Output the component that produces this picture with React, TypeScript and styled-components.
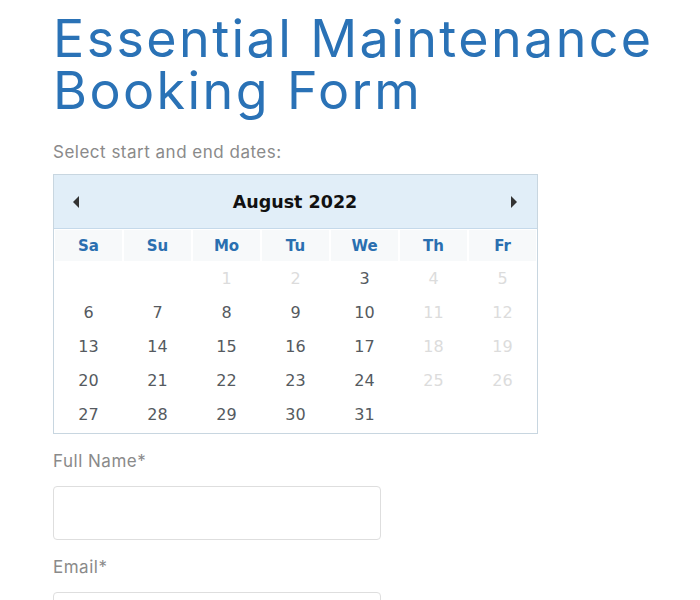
import React from 'react';
import styled, { createGlobalStyle } from 'styled-components';

const GlobalStyle = createGlobalStyle`
  html, body {
    margin: 0;
    padding: 0;
    background: #ffffff;
  }
`;

const Page = styled.div`
  padding: 13px 0 0 53px;
  font-family: Inter, 'Noto Sans', sans-serif;
`;

const Title = styled.h1`
  margin: 0;
  font-family: Inter, 'Noto Sans', sans-serif;
  font-weight: 400;
  font-size: 52px;
  color: #2a72b6;
`;

const TitleLine = styled.span`
  display: block;
  height: 52px;
  line-height: 52px;
  letter-spacing: 2.4px;
  white-space: nowrap;
`;

const Label = styled.div<{ $top: number }>`
  font-size: 17px;
  line-height: 20px;
  letter-spacing: 0.5px;
  color: #8a8a8a;
  margin: ${(p) => p.$top}px 0 0;
`;

const Calendar = styled.div`
  margin-top: 12px;
  width: 483px;
  border: 1px solid #c8d6e0;
  font-family: 'DejaVu Sans', sans-serif;
  padding-bottom: 2px;
`;

const CalHeader = styled.div`
  height: 53px;
  background: #e1eef8;
  border-bottom: 1px solid #c5d9ea;
  display: flex;
  align-items: center;
  justify-content: space-between;
  padding: 0 20px 0 19px;
`;

const Month = styled.div`
  font-weight: bold;
  font-size: 17.5px;
  color: #111;
`;

const Arrow = styled.div<{ $dir: 'left' | 'right' }>`
  width: 0;
  height: 0;
  border-top: 6px solid transparent;
  border-bottom: 6px solid transparent;
  ${(p) =>
    p.$dir === 'left'
      ? 'border-right: 6px solid #333;'
      : 'border-left: 6px solid #333;'}
`;

const Grid = styled.div`
  display: grid;
  grid-template-columns: repeat(7, 1fr);
  column-gap: 2px;
  padding: 1px 1px 0;
`;

const WeekDay = styled.div`
  height: 31px;
  display: flex;
  align-items: center;
  justify-content: center;
  background: #f7f9fa;
  color: #2a6fb0;
  font-weight: bold;
  font-size: 15px;
`;

const Day = styled.div<{ $off?: boolean }>`
  height: 34px;
  display: flex;
  align-items: center;
  justify-content: center;
  font-size: 16px;
  color: ${(p) => (p.$off ? '#dcdcdc' : '#555a60')};
`;

const Input = styled.input`
  display: block;
  box-sizing: border-box;
  width: 328px;
  height: 54px;
  margin-top: 15px;
  border: 1px solid #dedede;
  border-radius: 4px;
  background: #fff;
`;

const weekDays = ['Sa', 'Su', 'Mo', 'Tu', 'We', 'Th', 'Fr'];

const cells: (number | null)[] = [null, null, ...Array.from({ length: 31 }, (_, i) => i + 1)];
const enabled = (d: number, col: number) => d > 2 && col < 5;

const App = () => (
  <Page>
    <GlobalStyle />
    <Title>
      <TitleLine>Essential Maintenance</TitleLine>
      <TitleLine>Booking Form</TitleLine>
    </Title>
    <Label $top={25}>Select start and end dates:</Label>
    <Calendar>
      <CalHeader>
        <Arrow $dir="left" />
        <Month>August 2022</Month>
        <Arrow $dir="right" />
      </CalHeader>
      <Grid>
        {weekDays.map((w) => (
          <WeekDay key={w}>{w}</WeekDay>
        ))}
        {cells.map((d, i) =>
          d === null ? (
            <Day key={i} />
          ) : (
            <Day key={i} $off={!enabled(d, i % 7)}>
              {d}
            </Day>
          )
        )}
      </Grid>
    </Calendar>
    <Label $top={17}>Full Name*</Label>
    <Input type="text" />
    <Label $top={17}>Email*</Label>
    <Input type="text" />
  </Page>
);

export default App;
